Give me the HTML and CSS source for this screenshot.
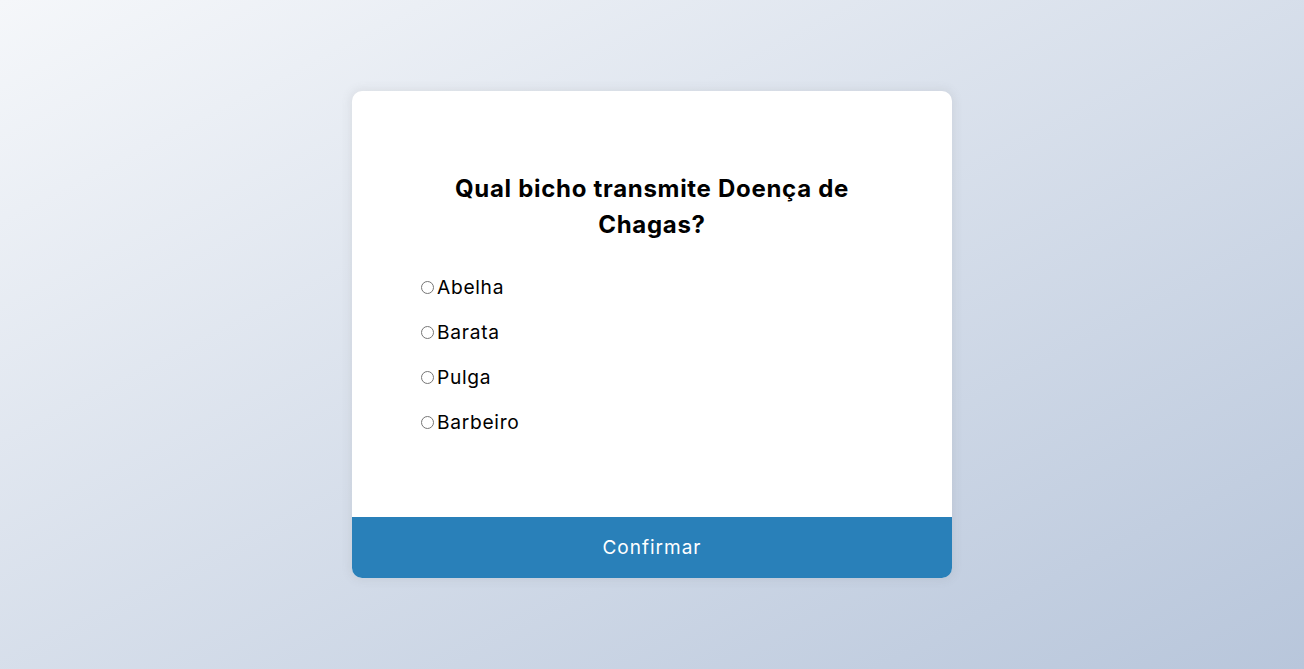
FILE: index.html
```html
<!DOCTYPE html>
<html lang="pt-BR">
<head>
<meta charset="UTF-8">
<title>Quiz</title>
<link rel="stylesheet" href="styles.css">
</head>
<body>
  <div class="quiz-container">
    <div class="quiz-header">
      <h2 class="question">Qual bicho transmite Doença de Chagas?</h2>
      <ul class="answers">
        <li><input type="radio" name="answer" id="a"><label for="a">Abelha</label></li>
        <li><input type="radio" name="answer" id="b"><label for="b">Barata</label></li>
        <li><input type="radio" name="answer" id="c"><label for="c">Pulga</label></li>
        <li><input type="radio" name="answer" id="d"><label for="d">Barbeiro</label></li>
      </ul>
    </div>
    <button class="submit">Confirmar</button>
  </div>
</body>
</html>
```

FILE: styles.css
```css
* { box-sizing: border-box; }

body {
  margin: 0;
  height: 100vh;
  display: flex;
  align-items: center;
  justify-content: center;
  font-family: "Inter", "Liberation Sans", sans-serif;
  background: linear-gradient(to bottom right, #f5f7fa, #b8c6db);
  overflow: hidden;
}

.quiz-container {
  width: 600px;
  background: #fff;
  border-radius: 10px;
  box-shadow: 0 0 10px 2px rgba(100, 100, 100, 0.1);
  overflow: hidden;
}

.quiz-header {
  padding: 64px 64px 64px;
}

.question {
  margin: 0;
  padding: 16px 8px 14px;
  text-align: center;
  font-size: 24px;
  line-height: 36px;
  font-weight: 700;
  letter-spacing: 0.7px;
  color: #000;
}

.answers {
  list-style: none;
  padding: 0;
  margin: 16px 0;
}

.answers li {
  margin: 16px 0;
  font-size: 19.2px;
  line-height: 28.8px;
  letter-spacing: 0.7px;
  display: flex;
  align-items: center;
}

.answers input {
  margin: 0 3px 0 5px;
  width: 13px;
  height: 13px;
}

.answers label { cursor: pointer; }

.submit {
  display: block;
  width: 100%;
  border: none;
  background: #2980b9;
  color: #fff;
  font-family: inherit;
  font-size: 19px;
  line-height: 25px;
  letter-spacing: 1px;
  padding: 18px 0;
  cursor: pointer;
}
```
